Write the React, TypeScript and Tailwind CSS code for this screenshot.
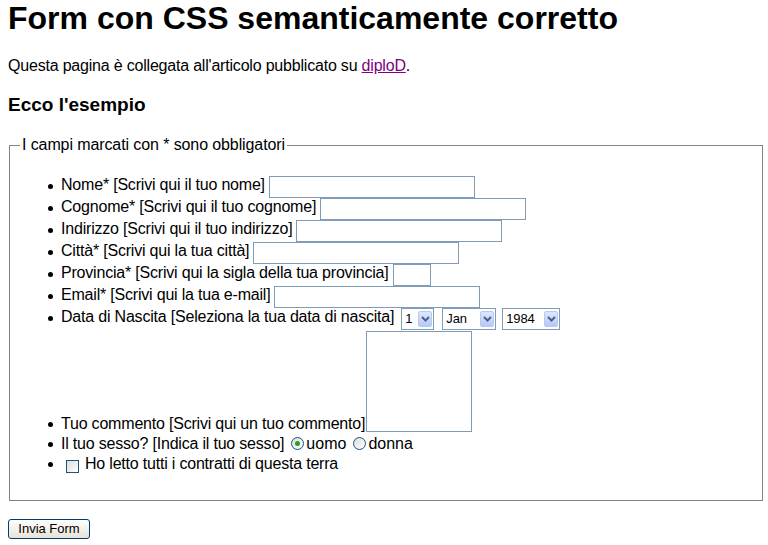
import React from "react";

function Bullet({ className = "" }: { className?: string }) {
  return (
    <span
      className={`w-[5px] h-[5px] rounded-full bg-black shrink-0 mr-[8px] ${className}`}
    />
  );
}

function TextInput({ width }: { width: string }) {
  return (
    <input
      type="text"
      className={`${width} h-[22px] border border-[#7f9db9] bg-white ml-[4px] shrink-0 outline-none`}
    />
  );
}

function FakeSelect({ value, width, className = "" }: { value: string; width: string; className?: string }) {
  return (
    <div
      className={`${width} h-[22px] border border-[#7f9db9] bg-white flex items-center shrink-0 text-[13px] ${className}`}
    >
      <span className="pl-[3px] leading-[16px]">{value}</span>
      <span className="ml-auto mr-[1px] w-[14px] h-[16px] flex items-center justify-center rounded-[2px] border border-[#b9c9ef] bg-gradient-to-b from-[#dde7fe] to-[#b6c8f6]">
        <svg width="9" height="6" viewBox="0 0 9 6">
          <path d="M1 1 L4.5 4.5 L8 1" stroke="#4d6185" strokeWidth="2" fill="none" />
        </svg>
      </span>
    </div>
  );
}

function Radio({ checked }: { checked?: boolean }) {
  return (
    <span className="w-[13px] h-[13px] rounded-full border border-[#1c5180] bg-gradient-to-br from-[#dcdcd7] to-white flex items-center justify-center shrink-0 mt-[4px]">
      {checked && <span className="w-[5px] h-[5px] rounded-full bg-[#21a121]" />}
    </span>
  );
}

const rows: { label: string; width: string }[] = [
  { label: "Nome* [Scrivi qui il tuo nome]", width: "w-[206px]" },
  { label: "Cognome* [Scrivi qui il tuo cognome]", width: "w-[206px]" },
  { label: "Indirizzo [Scrivi qui il tuo indirizzo]", width: "w-[206px]" },
  { label: "Città* [Scrivi qui la tua città]", width: "w-[206px]" },
  { label: "Provincia* [Scrivi qui la sigla della tua provincia]", width: "w-[38px]" },
  { label: "Email* [Scrivi qui la tua e-mail]", width: "w-[206px]" },
];

export default function App() {
  return (
    <div className="min-h-screen bg-white px-[8px] text-black text-[16px] font-['Liberation_Sans',Arial,sans-serif] tracking-[-0.2px]">
      <h1 className="text-[32px] leading-[36px] font-bold tracking-normal">
        Form con CSS semanticamente corretto
      </h1>
      <p className="mt-[21px] leading-[18px]">
        Questa pagina è collegata all'articolo pubblicato su{" "}
        <a href="#" className="text-[#800080] underline">
          diploD
        </a>
        .
      </p>
      <h2 className="mt-[19px] text-[19px] leading-[22px] font-bold tracking-normal">
        Ecco l'esempio
      </h2>

      <form>
        <fieldset className="mt-[20px] ml-[1px] w-[754px] border border-[#84847a] px-[10px] pb-[27px]">
          <legend className="px-[2px] leading-[18px] tracking-[-0.1px]">
            I campi marcati con * sono obbligatori
          </legend>
          <ul className="mt-[22px] pl-[28px]">
            {rows.map((r) => (
              <li key={r.label} className="flex items-start h-[22px]">
                <Bullet className="mt-[8px]" />
                <span className="leading-[18px] whitespace-nowrap">{r.label}</span>
                <TextInput width={r.width} />
              </li>
            ))}
            <li className="flex items-start h-[22px]">
              <Bullet className="mt-[8px]" />
              <span className="leading-[18px] whitespace-nowrap">
                Data di Nascita [Seleziona la tua data di nascita]
              </span>
              <FakeSelect value="1" width="w-[33px]" className="ml-[7px]" />
              <FakeSelect value="Jan" width="w-[54px]" className="ml-[8px]" />
              <FakeSelect value="1984" width="w-[58px]" className="ml-[6px]" />
            </li>
            <li className="flex items-end">
              <Bullet className="mb-[6px]" />
              <span className="leading-[18px] whitespace-nowrap">
                Tuo commento [Scrivi qui un tuo commento]
              </span>
              <textarea className="ml-[1px] mt-[1px] mb-[1px] w-[106px] h-[101px] border border-[#7f9db9] resize-none outline-none" />
            </li>
            <li className="flex items-start h-[20px]">
              <Bullet className="mt-[9px]" />
              <span className="mt-[1.5px] leading-[18px] whitespace-nowrap">
                Il tuo sesso? [Indica il tuo sesso]
              </span>
              <span className="ml-[7px]">
                <Radio checked />
              </span>
              <span className="ml-[2px] mt-[1.5px] leading-[18px] tracking-normal">uomo</span>
              <span className="ml-[7px]">
                <Radio />
              </span>
              <span className="ml-[2px] mt-[1.5px] leading-[18px] tracking-normal">donna</span>
            </li>
            <li className="flex items-start h-[20px]">
              <Bullet className="mt-[9px]" />
              <span className="ml-[5px] mt-[7px] w-[13px] h-[13px] border border-[#1c5180] bg-gradient-to-br from-[#dcdcd7] to-white shrink-0" />
              <span className="ml-[6px] mt-[1.5px] leading-[18px] whitespace-nowrap">
                Ho letto tutti i contratti di questa terra
              </span>
            </li>
          </ul>
        </fieldset>
        <button
          type="button"
          className="mt-[18px] w-[82px] h-[20px] rounded-[3px] border border-[#003c74] bg-gradient-to-b from-white to-[#e6e3d6] text-[13px] leading-[16px] tracking-normal text-black"
        >
          Invia Form
        </button>
      </form>
    </div>
  );
}
